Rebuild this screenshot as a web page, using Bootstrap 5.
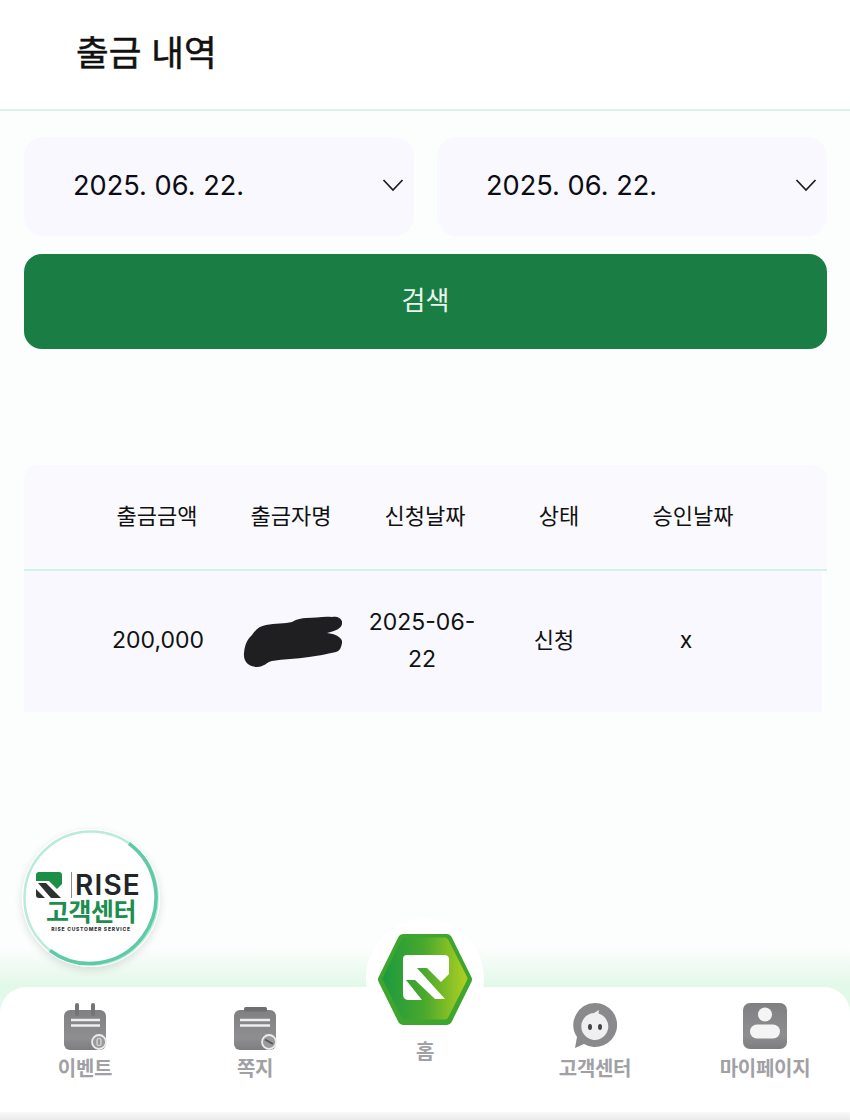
<!DOCTYPE html>
<html lang="ko">
<head>
  <meta charset="UTF-8">
  <meta name="viewport" content="width=device-width, initial-scale=1">
  <title>출금 내역</title>
  <link href="https://cdn.jsdelivr.net/npm/bootstrap@5.3.0/dist/css/bootstrap.min.css" rel="stylesheet">
  <style>
    body { font-family: Inter, "Noto Sans CJK KR", sans-serif; background: #fff; color: #111; }
    .page-wrap { width: 850px; height: 1120px; background: #fcfdfd; overflow: hidden; }
    .top-bar { height: 111px; background: #fff; border-bottom: 2px solid #d6f3e7; padding-left: 76px; }
    .top-title { font-size: 35.5px; font-weight: 400; -webkit-text-stroke: .5px #111; margin: 0; color: #111; }
    .main-area { padding: 26px 23px 0 24px; }
    .date-box { width: 390px; height: 99px; background: #f8f8fe; border-radius: 20px; padding: 0 10px 0 49px; font-size: 27.2px; color: #0c0c12; }
    .date-box svg { margin-bottom: 3px; }
    .search-btn { height: 95px; margin-top: 18px; background: #1a7d43; border: 0; border-radius: 18px; color: #e9f5ee; font-size: 26px; padding-bottom: 8px; }
    .search-btn:hover { background: #1a7d43; color: #e9f5ee; }
    .hist-wrap { margin-top: 116px; }
    .hist-head { height: 106px; background: #fafafe; border-bottom: 2px solid #d3f2e6; border-radius: 14px 14px 0 0; padding: 0 0 2px 66px; font-size: 22px; }
    .hist-head > div { width: 134px; text-align: center; }
    .hist-row { width: 798px; height: 141px; background: #f8f8fe; padding: 0 0 2px 68px; font-size: 23px; line-height: 37px; }
    .hist-row > div { width: 132px; text-align: center; }
    .hist-row .hist-ko { font-size: 22px; }
    .floating-cs { position: absolute; left: 22px; top: 829px; width: 138px; height: 138px; border-radius: 50%; background: radial-gradient(circle, #fff 80%, #e9f8f2 100%); box-shadow: 0 3px 8px rgba(0,0,0,.12); z-index: 3; }
    .floating-cs svg.cs-ring { position: absolute; inset: 0; }
    .cs-logo { position: absolute; left: 14px; top: 43px; }
    .cs-divider { position: absolute; left: 49px; top: 43px; width: 1px; height: 26px; background: #8a8f8c; }
    .cs-rise { position: absolute; left: 53px; top: 42px; font-size: 28px; font-weight: 600; color: #22262a; line-height: 28px; letter-spacing: 1.2px; }
    .cs-ko { position: absolute; left: 0; right: 0; top: 71px; text-align: center; font-size: 25px; font-weight: 700; line-height: 24px; color: #1e8e4e; letter-spacing: -.5px; }
    .cs-sub { position: absolute; left: 0; right: 0; top: 97px; text-align: center; font-size: 5px; font-weight: 800; line-height: 7px; color: #333; letter-spacing: .75px; }
    .bottom-area { margin-top: auto; padding-top: 38px; background: linear-gradient(to bottom, rgba(226,248,232,0), #e2f8e8 37px, #e2f8e8 100%); }
    .tab-panel { height: 125px; background: #fff; border-radius: 26px 26px 0 0; }
    .tab-strip { height: 8px; background: linear-gradient(to bottom, #f9f9fa, #ebebed); }
    .tab-cell { width: 170px; padding-top: 17px; }
    .tab-icon { height: 46px; display: block; overflow: visible; }
    .tab-label { margin-top: 7px; font-size: 20px; line-height: 24px; font-weight: 700; color: #a0a0a5; letter-spacing: -.3px; }
    .tab-home { padding-top: 53px; }
    .tab-home .tab-label { margin-top: 0; }
    .home-disc { position: absolute; left: 366px; top: 919px; width: 118px; height: 118px; border-radius: 50%; background: #fff; z-index: 2; }
    .home-disc svg { position: absolute; left: 11px; top: 14px; }
  </style>
</head>

<body>
  <div class="page-wrap d-flex flex-column position-relative">
    <header class="top-bar d-flex align-items-center">
      <h1 class="top-title">출금 내역</h1>
    </header>

    <div class="main-area">
      <div class="d-flex justify-content-between">
        <div class="date-box d-flex align-items-center justify-content-between">
          <span>2025. 06. 22.</span>
          <svg width="22" height="14" viewBox="0 0 22 14"><path d="M1.5 2 11 12 20.5 2" fill="none" stroke="#1c1c22" stroke-width="1.7"/></svg>
        </div>
        <div class="date-box d-flex align-items-center justify-content-between">
          <span>2025. 06. 22.</span>
          <svg width="22" height="14" viewBox="0 0 22 14"><path d="M1.5 2 11 12 20.5 2" fill="none" stroke="#1c1c22" stroke-width="1.7"/></svg>
        </div>
      </div>
      <button type="button" class="btn search-btn w-100">검색</button>

      <div class="hist-wrap">
        <div class="hist-head d-flex align-items-center">
          <div>출금금액</div>
          <div>출금자명</div>
          <div>신청날짜</div>
          <div>상태</div>
          <div>승인날짜</div>
        </div>
        <div class="hist-row d-flex align-items-center">
          <div>200,000</div>
          <div>
            <svg width="104" height="52" viewBox="-2 0 104 52" class="d-block mx-auto">
              <path d="M4 38C5 28 8 24 12 20C16 14 20 11 26 10C35 8 45 9 52 7C57 4 62 3 66 3C75 3 84 1 92 2C99 1 103 5 102 9C101 13 98 15 87 18C96 19 103 23 102 28C101 34 99 36 96 37C86 39 78 41 69 42C56 44 44 44 32 46C27 47 24 52 17 52C10 52 3 48 4 38Z" fill="#1f1f21"/>
            </svg>
          </div>
          <div>2025-06-<br>22</div>
          <div class="hist-ko">신청</div>
          <div>x</div>
        </div>
      </div>
    </div>

    <a class="floating-cs d-block text-decoration-none" href="#">
      <svg class="cs-ring" width="138" height="138" viewBox="0 0 138 138">
        <circle cx="69" cy="69" r="66.5" fill="none" stroke="#b9ebd9" stroke-width="2.500"/>
        <path d="M107 14.500A66.5 66.5 0 1 1 28 121.500" fill="none" stroke="#5fcba6" stroke-width="3.500"/>
      </svg>
      <svg class="cs-logo" width="26" height="26" viewBox="0 0 26 26">
        <path d="M3 0H23Q26 0 26 3V12L21 17 13 9H0V3Q0 0 3 0Z" fill="#1b8f45"/>
        <path d="M2 11H10L25 26H15ZM0 17 9 26H3Q0 26 0 23Z" fill="#2b3230"/>
      </svg>
      <span class="cs-divider"></span>
      <span class="cs-rise">RISE</span>
      <div class="cs-ko">고객센터</div>
      <div class="cs-sub">RISE CUSTOMER SERVICE</div>
    </a>

    <div class="home-disc">
      <svg width="96" height="93" viewBox="0 0 96 93">
        <defs>
          <linearGradient id="hexFill" x1="0" x2="1" y1="0" y2="0">
            <stop offset="0" stop-color="#1f9b3e"/>
            <stop offset=".5" stop-color="#4aa92c"/>
            <stop offset="1" stop-color="#a8cd22"/>
          </linearGradient>
        </defs>
        <path d="M26 6H70L90 46.500 70 87H26L6 46.500Z" fill="#3ea52e" stroke="#3ea52e" stroke-width="10" stroke-linejoin="round"/>
        <path d="M28 8H68L87 45.500 68 83H28L9 45.500Z" fill="url(#hexFill)" stroke="url(#hexFill)" stroke-width="7" stroke-linejoin="round"/>
        <path d="M30 22H67Q72 22 72 26V41L64 49 50 35H40L68 66H58L38 47H29L45 67H32Q26 67 26 61V26Q26 22 30 22Z" fill="#fff"/>
      </svg>
    </div>

    <div class="bottom-area">
      <nav class="tab-panel d-flex">
        <a class="tab-cell d-flex flex-column align-items-center text-decoration-none" href="#">
          <svg class="tab-icon" width="44" height="46" viewBox="0 0 44 46">
            <defs>
              <linearGradient id="grayFill" x1="0" x2="0" y1="0" y2="1">
                <stop offset="0" stop-color="#808083"/>
                <stop offset=".7" stop-color="#8e8e90"/>
                <stop offset="1" stop-color="#7d7d80"/>
              </linearGradient>
            </defs>
            <rect x="1" y="6" width="42" height="40" rx="6" fill="url(#grayFill)"/>
            <path d="M14 1V10M30 1V10" stroke="#747477" stroke-width="4" stroke-linecap="round"/>
            <path d="M8 16H37M8 21.500H37" stroke="#eee" stroke-width="2.500"/>
            <circle cx="36" cy="38" r="7" fill="#9a9a9c" stroke="#ececec" stroke-width="1.800"/>
            <rect x="34" y="34.500" width="4" height="7" rx="1.500" fill="none" stroke="#eee" stroke-width="1"/>
          </svg>
          <span class="tab-label">이벤트</span>
        </a>
        <a class="tab-cell d-flex flex-column align-items-center text-decoration-none" href="#">
          <svg class="tab-icon" width="44" height="46" viewBox="0 0 44 46">
            <rect x="1" y="6" width="42" height="40" rx="6" fill="url(#grayFill)"/>
            <rect x="11" y="3" width="23" height="4.500" rx="1.500" fill="#6f6f72"/>
            <path d="M7 16H37M7 21.500H37" stroke="#eee" stroke-width="2.500"/>
            <circle cx="36" cy="38" r="7" fill="#9a9a9c" stroke="#ececec" stroke-width="1.800"/>
            <path d="M32 35.500 40 40" stroke="#555" stroke-width="2"/>
          </svg>
          <span class="tab-label">쪽지</span>
        </a>
        <a class="tab-cell tab-home d-flex flex-column align-items-center text-decoration-none" href="#">
          <span class="tab-label">홈</span>
        </a>
        <a class="tab-cell d-flex flex-column align-items-center text-decoration-none" href="#">
          <svg class="tab-icon" width="44" height="46" viewBox="0 0 44 46">
            <path d="M22 -1A22 22 0 1 1 11 40L2 44 4 33A22 22 0 0 1 22 -1Z" fill="#8a8a8c"/>
            <path d="M21 9 26 6 25.500 9.500A13.500 13.500 0 1 1 21 9Z" fill="#efeff1"/>
            <ellipse cx="17" cy="23" rx="2" ry="3" fill="#444"/>
            <ellipse cx="27" cy="23" rx="2" ry="3" fill="#444"/>
          </svg>
          <span class="tab-label">고객센터</span>
        </a>
        <a class="tab-cell d-flex flex-column align-items-center text-decoration-none" href="#">
          <svg class="tab-icon" width="44" height="46" viewBox="0 0 44 46">
            <rect x="0" y="-1" width="44" height="46" rx="7" fill="url(#grayFill)"/>
            <circle cx="22" cy="10.500" r="7" fill="#f4f4f5"/>
            <rect x="7" y="20.500" width="30" height="14" rx="7" fill="#f4f4f5"/>
          </svg>
          <span class="tab-label">마이페이지</span>
        </a>
      </nav>
      <div class="tab-strip"></div>
    </div>
  </div>

  <script src="https://cdn.jsdelivr.net/npm/bootstrap@5.3.0/dist/js/bootstrap.bundle.min.js"></script>
</body>
</html>
